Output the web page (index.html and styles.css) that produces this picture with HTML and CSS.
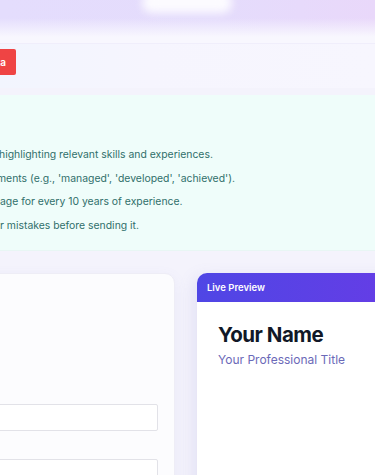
FILE: index.html
```html
<!DOCTYPE html>
<html lang="en">
<head>
    <meta charset="UTF-8">
    <meta name="viewport" content="width=device-width, initial-scale=1.0">
    <title>Resume Builder</title>
    <link rel="stylesheet" href="styles.css">
</head>
<body>
    <div class="viewport">
        <!-- Top header (blurred) -->
        <header class="topbar">
            <div class="glow"></div>
        </header>

        <!-- Toolbar with actions -->
        <div class="toolbar">
            <button class="btn-danger">Clear Data</button>
        </div>

        <!-- Tips box -->
        <section class="tips">
            <ul class="tip-list">
                <li class="tip-1">highlighting relevant skills and experiences.</li>
                <li class="tip-2">ments (e.g., 'managed', 'developed', 'achieved').</li>
                <li class="tip-3">age for every 10 years of experience.</li>
                <li class="tip-4">r mistakes before sending it.</li>
            </ul>
        </section>

        <!-- Editor + preview -->
        <main class="workspace">
            <div class="form-card">
                <h2 class="card-title">Personal Information</h2>
                <div class="field">
                    <label>Full Name</label>
                    <input type="text">
                </div>
                <div class="field">
                    <label>Professional Title</label>
                    <input type="text">
                </div>
            </div>

            <div class="preview-card">
                <div class="preview-head">Live Preview</div>
                <div class="preview-body">
                    <h1 class="preview-name">Your Name</h1>
                    <p class="preview-title">Your Professional Title</p>
                </div>
            </div>
        </main>
    </div>
</body>
</html>
```

FILE: styles.css
```css
/* Base */
body {
    margin: 0;
    font-family: Inter, "Noto Sans", sans-serif;
    background-color: #f4f3fc;
}
.viewport {
    width: 375px;
    height: 475px;
    overflow: hidden;
    position: relative;
}

/* Header */
.topbar {
    position: relative;
    height: 43px;
    background: linear-gradient(90deg, #e4ddfd 0%, #e5dcfc 60%, #e9d8fa 100%);
    border-bottom: 1px solid #f0eefb;
}
.topbar::after {
    content: "";
    position: absolute;
    left: 0;
    right: 0;
    top: 18px;
    bottom: 0;
    background: linear-gradient(180deg, rgba(248, 247, 254, 0) 0%, #f8f7fe 75%);
}
.glow {
    position: absolute;
    left: 142px;
    top: -8px;
    width: 90px;
    height: 21px;
    border-radius: 10px;
    background-color: #fcfbff;
    filter: blur(4px);
}

/* Toolbar */
.toolbar {
    height: 44px;
    background: linear-gradient(90deg, #f2f5fe 0%, #f6f5fe 40%, #f7f6fe 100%);
    padding-top: 5px;
    box-sizing: border-box;
}
.btn-danger {
    width: 80px;
    height: 26px;
    margin-left: -64px;
    padding: 0 10px 0 0;
    text-align: right;
    background-color: #ef4444;
    color: white;
    border: none;
    border-radius: 2px;
    font-family: Inter, sans-serif;
    font-size: 10px;
    font-weight: 600;
}

/* Tips */
.tips {
    margin-top: 7px;
    height: 156px;
    box-sizing: border-box;
    padding-top: 48px;
    background-color: #effdfa;
    border-bottom: 1px solid #e8f6f4;
}
.tip-list {
    list-style: none;
    margin: 0;
    padding: 0;
}
.tip-list li {
    font-size: 10.4px;
    line-height: 23.6px;
    color: #2f6f6a;
    white-space: nowrap;
}
.tip-1 { text-indent: -1px; }
.tip-2 { text-indent: -3px; }
.tip-3 { text-indent: 0; }
.tip-4 { text-indent: 0; }

/* Workspace */
.workspace {
    display: flex;
    gap: 22px;
    margin-top: 22px;
    margin-left: -200px;
}
.form-card {
    width: 375px;
    flex-shrink: 0;
    height: 260px;
    box-sizing: border-box;
    padding: 20px 16px 0 20px;
    background-color: #fcfcfe;
    border: 1px solid #eeedf6;
    border-radius: 10px;
    box-shadow: 0 4px 14px rgba(120, 110, 200, 0.08);
}
.card-title {
    margin: 0 0 71px;
    font-size: 15px;
    line-height: 20px;
    color: #1f2937;
}
.field {
    margin-bottom: 9px;
}
.field label {
    display: block;
    font-size: 11px;
    line-height: 14px;
    margin-bottom: 5px;
    color: #374151;
}
.field input {
    display: block;
    width: 100%;
    height: 27px;
    box-sizing: border-box;
    border: 1px solid #e2e2e8;
    border-radius: 2px;
    background-color: white;
}

/* Preview */
.preview-card {
    width: 400px;
    flex-shrink: 0;
    height: 260px;
    background-color: white;
    border-radius: 10px;
    overflow: hidden;
    box-shadow: -4px 4px 16px rgba(120, 110, 200, 0.14);
}
.preview-head {
    height: 29px;
    line-height: 29px;
    padding-left: 10px;
    background: linear-gradient(90deg, #4f46e5 0%, #6a3be6 60%, #7c3aed 100%);
    color: white;
    font-size: 9.5px;
    font-weight: 600;
}
.preview-body {
    padding: 20px 21px;
}
.preview-name {
    margin: 0;
    font-size: 20.5px;
    line-height: 26px;
    letter-spacing: -0.5px;
    font-weight: 700;
    color: #111827;
}
.preview-title {
    margin: 4px 0 0;
    font-size: 12px;
    line-height: 16px;
    color: #6b69b8;
}
```
